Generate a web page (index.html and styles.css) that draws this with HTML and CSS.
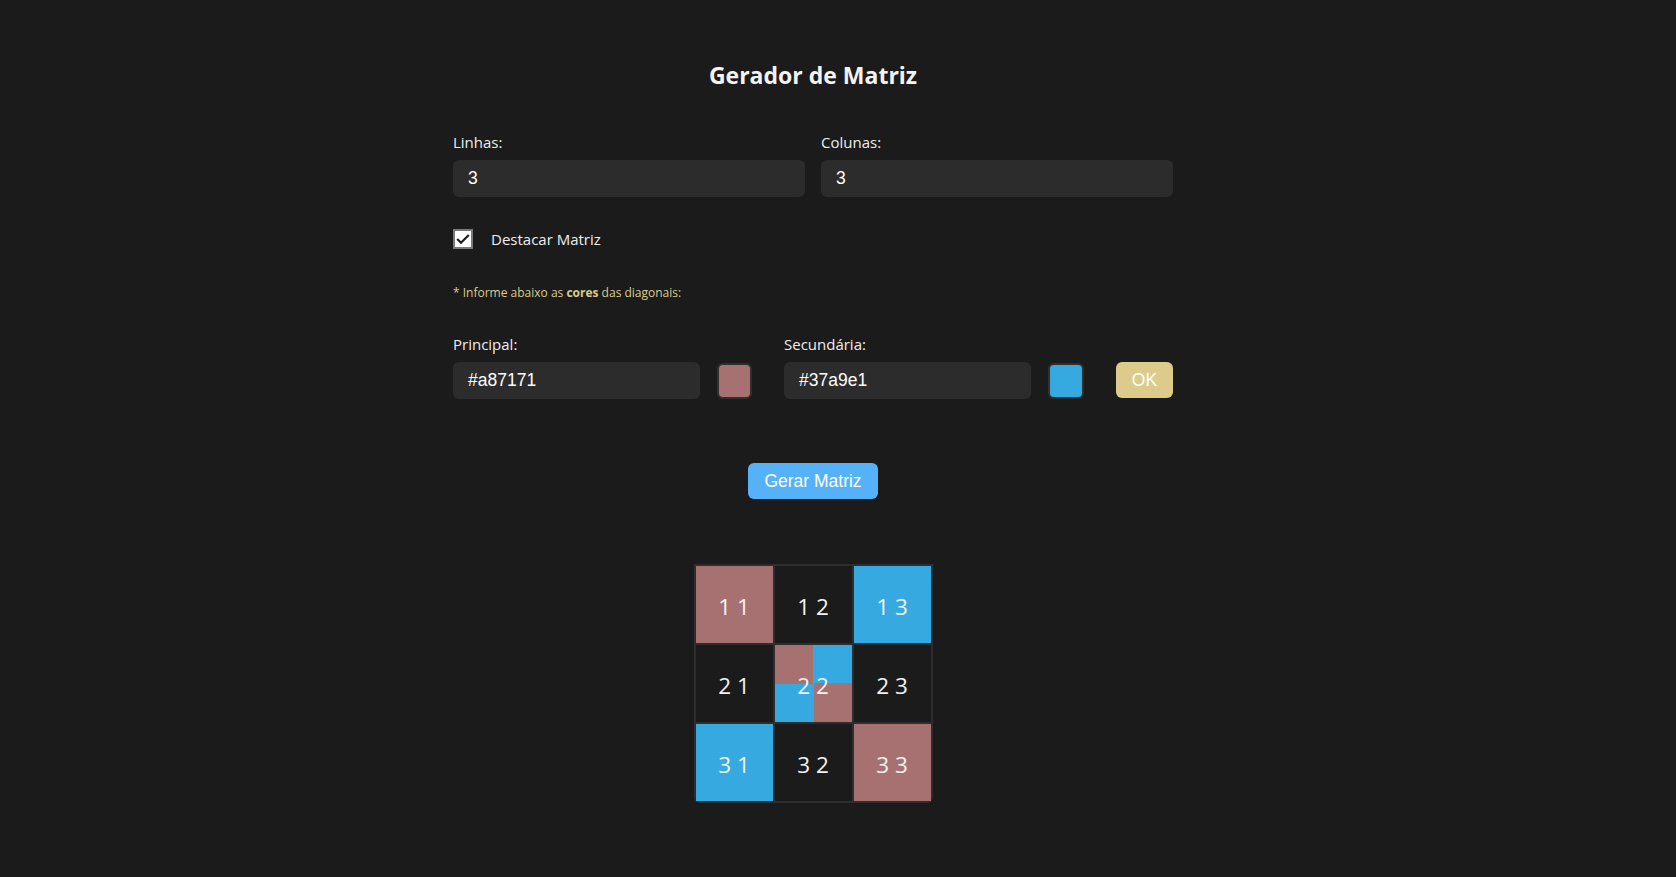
FILE: index.html
```html
<!DOCTYPE html>
<html lang="pt-BR">
<head>
<meta charset="utf-8">
<title>Gerador de Matriz</title>
<link rel="stylesheet" href="styles.css">
</head>
<body>
<main class="container">
  <h1 class="title">Gerador de Matriz</h1>

  <div class="dims">
    <div class="field">
      <label class="label">Linhas:</label>
      <div class="input">3</div>
    </div>
    <div class="field">
      <label class="label">Colunas:</label>
      <div class="input">3</div>
    </div>
  </div>

  <div class="check-row">
    <span class="checkbox">
      <svg width="16" height="16" viewBox="0 0 16 16"><path d="M2.2 8 L6 11.8 L13.8 4" fill="none" stroke="#1e1e1e" stroke-width="2.2"/></svg>
    </span>
    <span class="check-label">Destacar Matriz</span>
  </div>

  <p class="note">* Informe abaixo as <b>cores</b> das diagonais:</p>

  <div class="colors">
    <div class="cgroup">
      <label class="label">Principal:</label>
      <div class="crow">
        <div class="input cinput">#a87171</div>
        <div class="swatch swatch-pink"></div>
      </div>
    </div>
    <div class="cgroup">
      <label class="label">Secundária:</label>
      <div class="crow">
        <div class="input cinput">#37a9e1</div>
        <div class="swatch swatch-blue"></div>
      </div>
    </div>
    <button class="ok">OK</button>
  </div>

  <div class="actions">
    <button class="gerar">Gerar Matriz</button>
  </div>

  <div class="matrix">
    <div class="cell pink">1 1</div>
    <div class="cell">1 2</div>
    <div class="cell blue">1 3</div>
    <div class="cell">2 1</div>
    <div class="cell both">2 2</div>
    <div class="cell">2 3</div>
    <div class="cell blue">3 1</div>
    <div class="cell">3 2</div>
    <div class="cell pink">3 3</div>
  </div>
</main>
</body>
</html>
```

FILE: styles.css
```css
html, body {
  margin: 0;
  padding: 0;
  background: #1b1b1b;
}
body {
  padding-right: 50px;
  font-family: "Open Sans", "Noto Sans", sans-serif;
  color: #eeeeee;
}
.container {
  width: 720px;
  margin: 0 auto;
  padding-top: 60px;
  display: flex;
  flex-direction: column;
}
.title {
  margin: 0;
  font-size: 23px;
  line-height: 31px;
  font-weight: 700;
  text-align: center;
  color: #f3f3f3;
}
.dims {
  display: flex;
  gap: 16px;
  margin-top: 41px;
}
.field {
  flex: 1;
  display: flex;
  flex-direction: column;
}
.label {
  display: block;
  font-size: 15px;
  line-height: 20px;
  color: #eeeeee;
  margin-bottom: 8px;
}
.input {
  height: 37px;
  box-sizing: border-box;
  background: #2c2c2c;
  border-radius: 6px;
  padding: 0 15px;
  font-family: "Liberation Sans", Arial, sans-serif;
  font-size: 17.5px;
  line-height: 37px;
  color: #ffffff;
}
.check-row {
  display: flex;
  align-items: center;
  gap: 18px;
  margin-top: 32px;
  height: 20px;
}
.checkbox {
  width: 20px;
  height: 20px;
  box-sizing: border-box;
  background: #ffffff;
  border: 2px solid #7a7a7a;
  display: flex;
  align-items: center;
  justify-content: center;
}
.checkbox svg {
  display: block;
}
.check-label {
  font-size: 15px;
  line-height: 20px;
  color: #eeeeee;
}
.note {
  margin: 36px 0 0;
  font-size: 12px;
  line-height: 16px;
  color: #dccb8b;
}
.note b {
  font-weight: 700;
}
.colors {
  display: flex;
  align-items: flex-end;
  gap: 32px;
  margin-top: 33px;
}
.cgroup {
  display: flex;
  flex-direction: column;
}
.crow {
  display: flex;
  gap: 17px;
  align-items: center;
}
.cinput {
  width: 247px;
}
.swatch {
  width: 35px;
  height: 36px;
  box-sizing: border-box;
  border: 2px solid #303030;
  border-radius: 6px;
}
.swatch-pink { background: #a87171; }
.swatch-blue { background: #37a9e1; width: 36px; }
.ok {
  width: 57px;
  height: 36px;
  margin-bottom: 1px;
  border: none;
  border-radius: 6px;
  background: #dccb8b;
  color: #ffffff;
  font-family: "Liberation Sans", Arial, sans-serif;
  font-size: 17.5px;
  padding: 0;
}
.actions {
  display: flex;
  justify-content: center;
  margin-top: 64px;
}
.gerar {
  width: 130px;
  height: 36px;
  border: none;
  border-radius: 6px;
  background: #55b1f8;
  color: #ffffff;
  font-family: "Liberation Sans", Arial, sans-serif;
  font-size: 17.5px;
  padding: 0;
}
.matrix {
  align-self: center;
  margin-top: 65px;
  display: grid;
  grid-template-columns: repeat(3, 77px);
  grid-auto-rows: 77px;
  gap: 2px;
  padding: 2px;
  background: #2e2e2e;
  border-radius: 0 0 6px 6px;
  overflow: hidden;
}
.cell {
  display: flex;
  align-items: center;
  justify-content: center;
  box-sizing: border-box;
  padding-top: 4px;
  background: #1b1b1b;
  font-size: 22.5px;
  color: #f2f2f2;
  white-space: pre;
}
.cell.pink { background: #a87171; }
.cell.blue { background: #37a9e1; }
.cell.both {
  background: conic-gradient(#37a9e1 0 25%, #a87171 0 50%, #37a9e1 0 75%, #a87171 0);
}
```
